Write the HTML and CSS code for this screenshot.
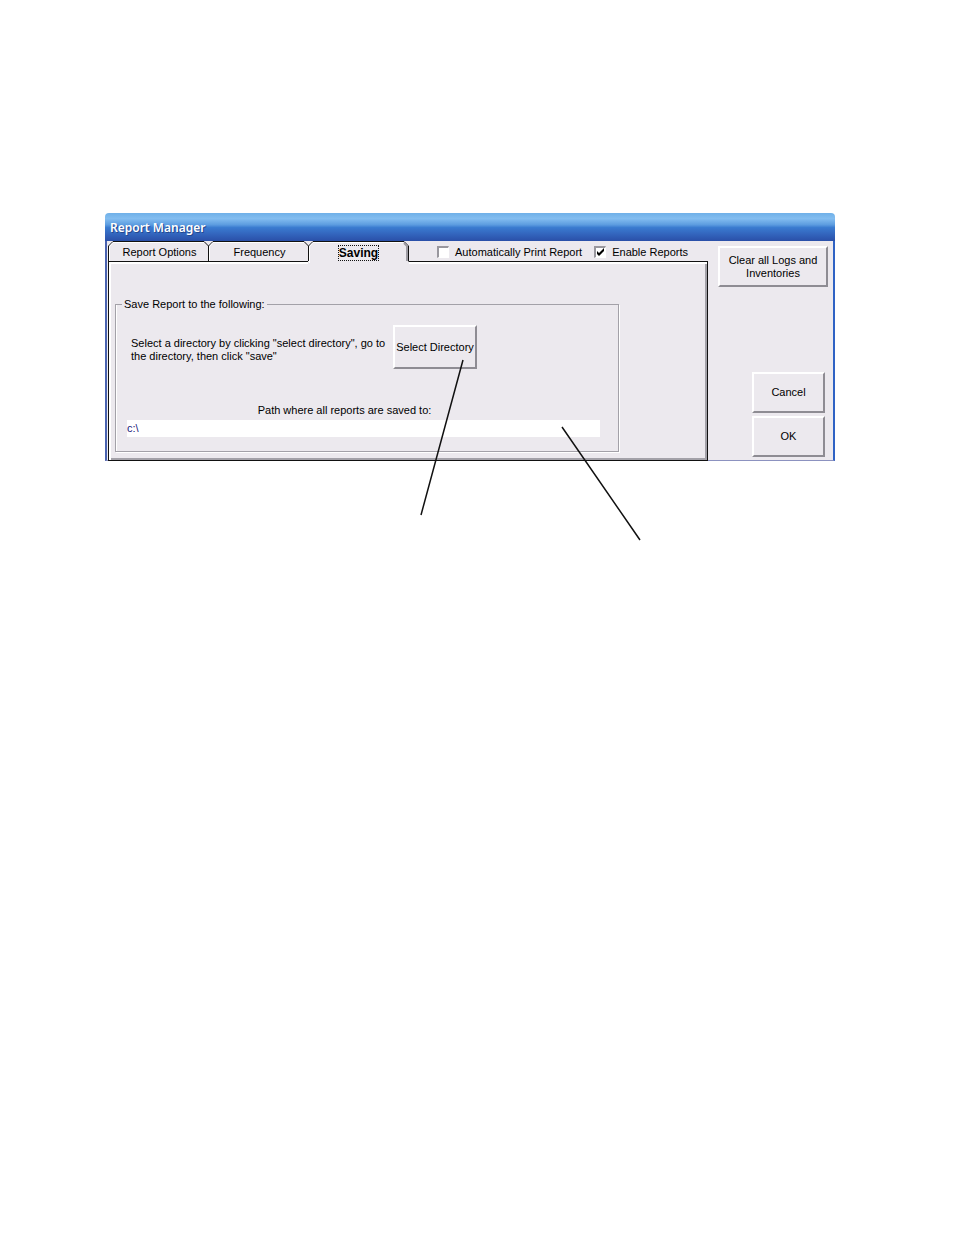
FILE: index.html
```html
<!DOCTYPE html>
<html lang="en">
<head>
<meta charset="utf-8">
<title>Report Manager</title>
<link rel="stylesheet" href="styles.css">
</head>
<body>
<main class="page">
  <section class="window" aria-labelledby="window-title">
    <h1 class="titlebar" id="window-title">Report Manager</h1>
    <div class="content">
      <div class="left">
        <div class="toolbar">
          <div class="tabs" role="tablist">
            <button class="tab" role="tab" type="button" aria-selected="false">
              <svg class="tab-shape" viewBox="0 0 101 20" preserveAspectRatio="none" aria-hidden="true"><path d="M0.5 20V5L5 .5H96L100.500 5V20" fill="#ece9ee" stroke="#111"/><path d="M1.500 20V5.500L5 1.500H96" fill="none" stroke="#fff"/></svg>
              <span class="tab-label">Report Options</span>
            </button>
            <button class="tab" role="tab" type="button" aria-selected="false">
              <svg class="tab-shape" viewBox="0 0 101 20" preserveAspectRatio="none" aria-hidden="true"><path d="M0.5 20V5L5 .5H96L100.500 5V20" fill="#ece9ee" stroke="#111"/><path d="M1.500 20V5.500L5 1.500H96" fill="none" stroke="#fff"/></svg>
              <span class="tab-label">Frequency</span>
            </button>
            <button class="tab tab-active" role="tab" type="button" aria-selected="true">
              <svg class="tab-shape" viewBox="0 0 101 23" preserveAspectRatio="none" aria-hidden="true"><path d="M0 23V5L5 .5H96L101 5V23Z" fill="#ece9ee"/><path d="M.5 20V5L5 .5H96L100.500 5V20.500" fill="none" stroke="#111"/><path d="M1.500 22V5.500L5 1.500H95" fill="none" stroke="#fff"/><path d="M96 2L99 5V20" fill="none" stroke="#9d9ba2" stroke-width="2"/></svg>
              <span class="tab-label">Saving</span>
            </button>
          </div>
          <div class="options">
            <label class="check"><input class="box" type="checkbox">Automatically Print Report</label>
            <label class="check"><input class="box" type="checkbox" checked>Enable Reports</label>
          </div>
        </div>
        <div class="panel" role="tabpanel">
          <fieldset class="group">
            <legend class="legend">Save Report to the following:</legend>
            <div class="choose">
              <p class="hint">Select a directory by clicking "select directory", go to the directory, then click "save"</p>
              <button class="button directory" type="button">Select Directory</button>
            </div>
            <label class="path-label" for="path">Path where all reports are saved to:</label>
            <input class="path" id="path" type="text" value="c:\">
          </fieldset>
        </div>
      </div>
      <div class="actions">
        <button class="button clear" type="button">Clear all Logs and Inventories</button>
        <div class="confirm">
          <button class="button" type="button">Cancel</button>
          <button class="button" type="button">OK</button>
        </div>
      </div>
    </div>
    <svg class="callouts" width="730" height="330" viewBox="0 0 730 330" aria-hidden="true"><path d="M358 147L316 302M457 214L535 327" fill="none" stroke="#111" stroke-width="1.500"/></svg>
  </section>
</main>
</body>
</html>
```
FILE: styles.css
```css
* { box-sizing: border-box; }

body {
  margin: 0;
  background: #fff;
  color: #000;
  font: 11px/13px "Liberation Sans", Arial, sans-serif;
}

button, input { font: inherit; color: inherit; }

.page { min-height: 100vh; padding: 213px 119px 0 105px; }

.window { position: relative; }

.titlebar {
  margin: 0;
  height: 28px;
  padding: 1px 5px 0;
  border-radius: 4px 4px 0 0;
  background: linear-gradient(#6fb0e8, #83bdf0 20%, #5c9ce0 42%, #3a7bd0 52%, #3468c0 72%, #2a4fa8);
  color: #fff;
  font: 600 12px/28px "Noto Sans", sans-serif;
  text-shadow: 1px 1px #24488f;
}

.content {
  display: flex;
  border: solid #8c92c0;
  border-width: 0 2px 1px;
  border-left-color: #4a63b0;
  border-right-color: #2f62c4;
  background: #ece9ee;
}

.left { flex: 1; min-width: 0; margin-bottom: -1px; padding-left: 1px; }

.toolbar { display: flex; height: 20px; }

.tabs { display: flex; }

.tab {
  position: relative;
  width: 101px;
  height: 20px;
  padding: 2px 0 0;
  border: 0;
  background: none;
}

.tab + .tab { margin-left: -1px; }

.tab-active { height: 23px; z-index: 1; font-size: 12px; font-weight: bold; }

.tab-shape { position: absolute; inset: 0; width: 100%; height: 100%; }

.tab-label { position: relative; padding-left: 2px; }

.tab-active .tab-label { padding: 0; outline: 1px dotted #111; }

.options { display: flex; gap: 12px; padding-left: 28px; }

.check { display: flex; align-items: center; gap: 6px; padding-top: 2px; white-space: nowrap; }

.box {
  appearance: none;
  width: 12px;
  height: 12px;
  margin: 0;
  border: solid #99979e;
  border-width: 2px 1px 1px 2px;
  border-right-color: #fff;
  border-bottom-color: #fff;
  background: #fff;
}

.box:checked {
  background: #fff url("data:image/svg+xml,%3Csvg xmlns='http://www.w3.org/2000/svg' viewBox='0 0 9 9'%3E%3Cpath d='M1 3v3l2 2 5-5V0L3 5z'/%3E%3C/svg%3E") center / 9px 9px no-repeat;
}

.panel {
  padding: 36px 88px 8px 6px;
  border: 1px solid #111;
  box-shadow: inset 2px 2px #fff, inset -2px -2px #a3a1a8;
}

.group {
  margin: 0;
  padding: 14px 18px 14px 11px;
  border: 1px solid #a3a1a8;
  box-shadow: 1px 1px #fff, inset 1px 0 #fff;
  min-width: 0;
}

.legend { margin-left: -5px; padding: 0 2px; }

.choose { display: flex; align-items: flex-start; gap: 3px; padding-left: 4px; }

.hint { width: 259px; margin: 12px 0 0; }

.button {
  height: 41px;
  padding: 0 4px;
  border: 2px solid;
  border-color: #fff #8e8c93 #8e8c93 #fff;
  background: #ece9ee;
}

.clear { padding: 0 8px; }

.directory { width: 84px; height: 44px; padding: 0; white-space: nowrap; }

.path-label { display: block; margin: 35px 0 3px; text-align: center; padding-right: 38px; }

.path {
  display: block;
  width: 100%;
  height: 17px;
  padding: 0 0 2px;
  border: 0;
  background: #fff;
  color: #17177a;
}

.actions {
  display: flex;
  flex-direction: column;
  justify-content: space-between;
  width: 125px;
  padding: 5px 5px 3px 10px;
}

.confirm { display: flex; flex-direction: column; gap: 3px; width: 73px; margin: 0 3px 0 auto; }

.callouts { position: absolute; top: 0; left: 0; pointer-events: none; }
```
